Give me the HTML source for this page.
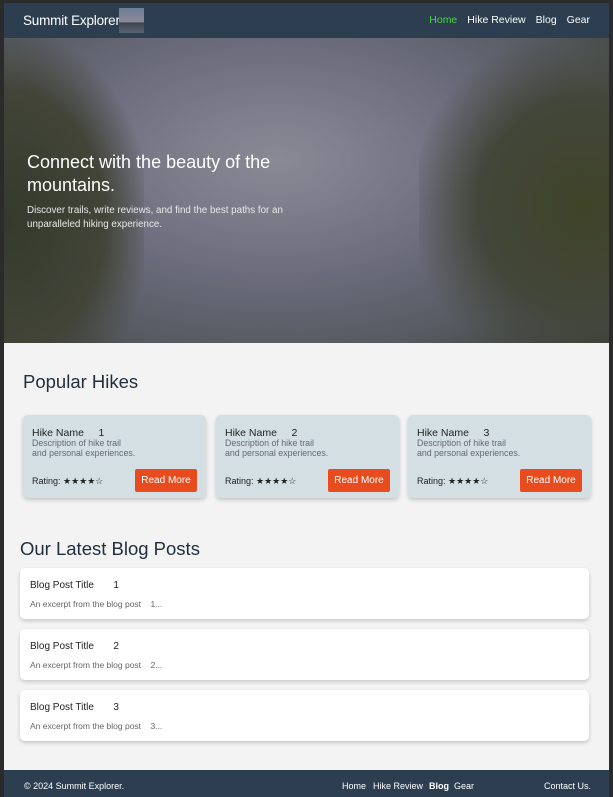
<!DOCTYPE html>
<html><head><style>
*{box-sizing:border-box;margin:0;padding:0}
body{width:613px;height:797px;background:#2b2b2b;font-family:"Liberation Sans",sans-serif;overflow:hidden;position:relative}
.wrap{position:absolute;left:4px;top:3px;width:605px;height:794px;background:#f3f3f3}
nav{height:35px;background:#2c3e50;position:relative;color:#fff}
.logo{position:absolute;left:19px;top:10px;font-size:13.5px;letter-spacing:-0.2px}
.thumb{position:absolute;left:115px;top:5px;width:25px;height:25px;background:linear-gradient(#6c7d96,#8e8a98 55%,#3e4650 60%,#5a6470)}
.links{position:absolute;right:19px;top:11px;font-size:10.5px}
.links span{margin-left:10px}
.hero{position:absolute;top:35px;left:0;width:605px;height:305px;overflow:hidden;
background:radial-gradient(ellipse at 45% 40%,#8a8a96 0%,#6f6f80 40%,#555a60 75%,#3a3f36 100%)}
.tl{position:absolute;left:-30px;top:0;width:170px;height:305px;background:radial-gradient(ellipse at 20% 60%,#343a2c 0%,#424438 50%,rgba(80,80,80,0) 75%)}
.tr{position:absolute;right:-30px;top:0;width:220px;height:305px;background:radial-gradient(ellipse at 75% 55%,#3f4428 0%,#43463a 45%,rgba(80,80,80,0) 75%)}
.hero h1{position:absolute;left:23px;top:113px;font-weight:normal;font-size:18px;line-height:23px;color:#fff;width:300px}
.hero p{position:absolute;left:23px;top:166px;font-size:9.8px;line-height:14px;color:#e8e8e8;width:300px}
h2{position:absolute;font-weight:normal;color:#1f2d3d;font-size:18.5px}
.card{position:absolute;top:412px;width:183px;height:83px;background:#d3dfe2;border-radius:5px;box-shadow:0 2px 4px rgba(0,0,0,.2)}
.card b{position:absolute;left:9px;top:12px;font-weight:normal;font-size:10.5px;color:#222}
.card .d{position:absolute;left:9px;top:23px;font-size:8.8px;line-height:10px;color:#667}
.card .r{position:absolute;left:9px;top:61px;font-size:9px;color:#222}
.btn{position:absolute;right:9px;top:54px;width:62px;height:23px;background:#e84c1e;color:#fff;border-radius:2px;font-size:10px;text-align:center;line-height:23px}
.post{position:absolute;left:16px;width:569px;height:51px;background:#fff;border-radius:5px;box-shadow:0 2px 4px rgba(0,0,0,.18)}
.post b{position:absolute;left:10px;top:12px;font-weight:normal;font-size:10px;color:#222;white-space:pre}
.post i{position:absolute;left:10px;top:31px;font-style:normal;font-size:8.5px;color:#666;white-space:pre}
footer{position:absolute;top:767px;left:0;width:605px;height:27px;background:#2c3e50;color:#fff;font-size:9px}
footer span{position:absolute;top:11px}
</style></head><body><div class="wrap">
<nav><div class="logo">Summit Explorer</div><div class="thumb"></div>
<div class="links"><span style="color:#3ddc3d">Home</span><span>Hike Review</span><span>Blog</span><span>Gear</span></div></nav>
<div class="hero"><div class="tl"></div><div class="tr"></div>
<h1>Connect with the beauty of the mountains.</h1>
<p>Discover trails, write reviews, and find the best paths for an unparalleled hiking experience.</p></div>
<h2 style="left:19px;top:368px">Popular Hikes</h2>
<div class="card" style="left:19px"><b>Hike Name &nbsp;&nbsp;&nbsp; 1</b><div class="d">Description of hike trail<br>and personal experiences.</div><div class="r">Rating: ★★★★☆</div><div class="btn">Read More</div></div>
<div class="card" style="left:212px"><b>Hike Name &nbsp;&nbsp;&nbsp; 2</b><div class="d">Description of hike trail<br>and personal experiences.</div><div class="r">Rating: ★★★★☆</div><div class="btn">Read More</div></div>
<div class="card" style="left:404px"><b>Hike Name &nbsp;&nbsp;&nbsp; 3</b><div class="d">Description of hike trail<br>and personal experiences.</div><div class="r">Rating: ★★★★☆</div><div class="btn">Read More</div></div>
<h2 style="left:16px;top:535px">Our Latest Blog Posts</h2>
<div class="post" style="top:565px"><b>Blog Post Title       1</b><i>An excerpt from the blog post    1...</i></div>
<div class="post" style="top:626px"><b>Blog Post Title       2</b><i>An excerpt from the blog post    2...</i></div>
<div class="post" style="top:687px"><b>Blog Post Title       3</b><i>An excerpt from the blog post    3...</i></div>
<footer><span style="left:20px">© 2024 Summit Explorer.</span>
<span style="left:338px">Home</span><span style="left:369px">Hike Review</span><span style="left:425px;font-weight:bold">Blog</span><span style="left:450px">Gear</span>
<span style="left:540px">Contact Us.</span></footer>
</div></body></html>
